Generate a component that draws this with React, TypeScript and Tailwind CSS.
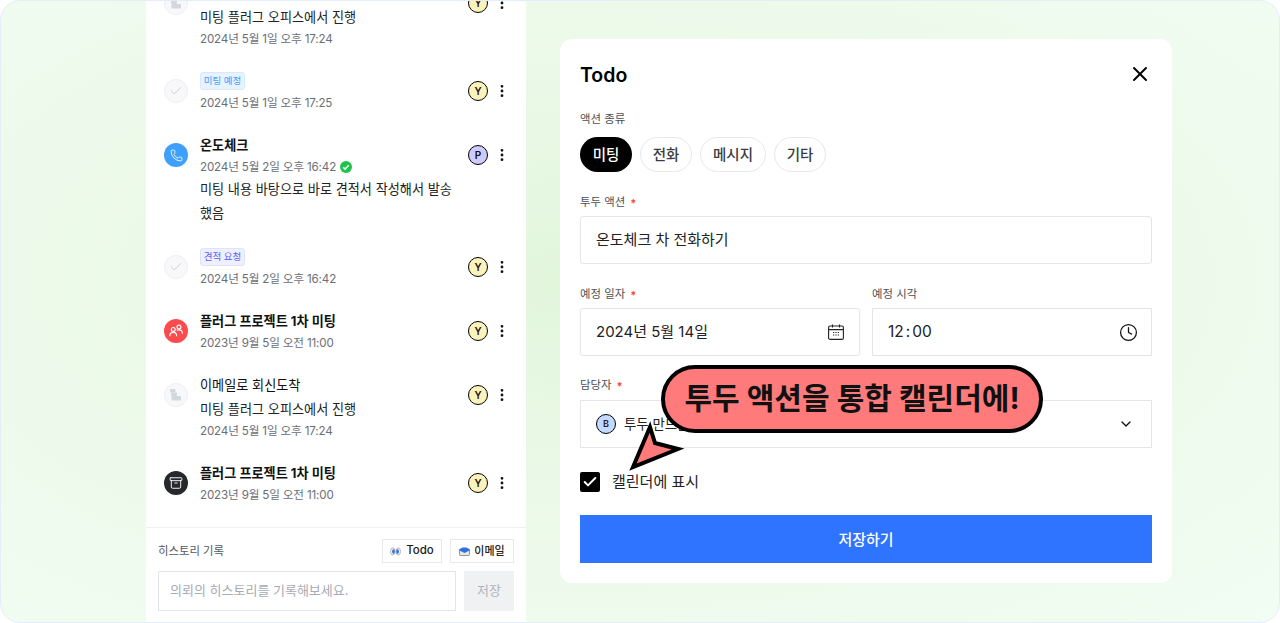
import { Archive, Check, ChevronDown, Clock, EllipsisVertical, Phone, X } from 'lucide-react'

type Kind = 'doc' | 'check' | 'phone' | 'meeting' | 'archive'

interface HistoryItem {
  kind: Kind
  title?: string
  bold?: boolean
  badge?: { text: string; cls: string }
  date: string
  done?: boolean
  lines?: string[]
  user: 'Y' | 'P'
}

const items: HistoryItem[] = [
  { kind: 'doc', title: '이메일로 회신도착', lines: ['미팅 플러그 오피스에서 진행'], date: '2024년 5월 1일 오후 17:24', user: 'Y' },
  { kind: 'check', badge: { text: '미팅 예정', cls: 'bg-[#e8f3ff] border-[#d6e9ff] text-[#3b9dff]' }, date: '2024년 5월 1일 오후 17:25', user: 'Y' },
  { kind: 'phone', title: '온도체크', bold: true, date: '2024년 5월 2일 오후 16:42', done: true, lines: ['미팅 내용 바탕으로 바로 견적서 작성해서 발송', '했음'], user: 'P' },
  { kind: 'check', badge: { text: '견적 요청', cls: 'bg-[#eeefff] border-[#e0e2ff] text-[#5b63f5]' }, date: '2024년 5월 2일 오후 16:42', user: 'Y' },
  { kind: 'meeting', title: '플러그 프로젝트 1차 미팅', bold: true, date: '2023년 9월 5일 오전 11:00', user: 'Y' },
  { kind: 'doc', title: '이메일로 회신도착', lines: ['미팅 플러그 오피스에서 진행'], date: '2024년 5월 1일 오후 17:24', user: 'Y' },
  { kind: 'archive', title: '플러그 프로젝트 1차 미팅', bold: true, date: '2023년 9월 5일 오전 11:00', user: 'Y' },
]

function KindIcon({ kind }: { kind: Kind }) {
  if (kind === 'phone') {
    return (
      <div className="flex h-6 w-6 items-center justify-center rounded-full bg-[#3fa0fb] text-white">
        <Phone size={13} strokeWidth={1.6} />
      </div>
    )
  }
  if (kind === 'meeting') {
    return (
      <div className="flex h-6 w-6 items-center justify-center rounded-full bg-[#fb4b4f] text-white">
        <svg width="16" height="16" viewBox="0 0 14 14" fill="none" stroke="#fff" strokeWidth="1">
          <circle cx="4.6" cy="5.6" r="1.7" />
          <circle cx="9.6" cy="3.6" r="1.7" />
          <path d="M1.6 11.6c0-2 1.2-3.4 3-3.4s3 1.4 3 3.4" />
          <path d="M7.6 6.4c.6-.3 1.3-.4 2-.4 1.8 0 3 1.4 3 3.4" />
        </svg>
      </div>
    )
  }
  if (kind === 'archive') {
    return (
      <div className="flex h-6 w-6 items-center justify-center rounded-full bg-[#26282c] text-white">
        <Archive size={14} strokeWidth={1.6} />
      </div>
    )
  }
  if (kind === 'check') {
    return (
      <div className="flex h-6 w-6 items-center justify-center rounded-full border border-[#eeeff2] bg-[#f8f8fa] text-[#c4c7cf]">
        <Check size={14} strokeWidth={1.4} />
      </div>
    )
  }
  return (
    <div className="flex h-6 w-6 items-center justify-center rounded-full border border-[#eeeff2] bg-[#f8f8fa]">
      <svg width="14" height="14" viewBox="0 0 14 14" fill="#d5d7de">
        <rect x="1" y="1" width="5.5" height="3.5" rx="1" />
        <rect x="2" y="4.5" width="6" height="3.5" rx="1" />
        <rect x="2.5" y="8" width="9.5" height="4.5" rx="1" />
      </svg>
    </div>
  )
}

function Row({ item }: { item: HistoryItem }) {
  return (
    <div className="flex">
      <div className="mt-[10px] mr-3 shrink-0">
        <KindIcon kind={item.kind} />
      </div>
      <div className="w-[268px] shrink-0">
        {item.badge && (
          <div className="flex h-6 items-center">
            <span className={`flex h-[18px] w-[45px] items-center justify-center rounded-[3px] border text-[9.5px] ${item.badge.cls}`}>{item.badge.text}</span>
          </div>
        )}
        {item.title && (
          <div className={`h-6 text-[13.15px] leading-6 text-[#111] ${item.bold ? 'font-bold' : ''}`}>{item.title}</div>
        )}
        {item.kind === 'doc' && item.lines?.map((l) => (
          <div key={l} className="h-6 text-[13.15px] leading-6 text-[#222]">{l}</div>
        ))}
        <div className="flex h-5 items-center gap-1 text-[11.6px] leading-5 tracking-[-0.15px] text-[#6b6e76]">
          {item.date}
          {item.done && (
            <svg width="12" height="12" viewBox="0 0 12 12">
              <circle cx="6" cy="6" r="6" fill="#1cc44a" />
              <path d="M3.2 6.2l1.9 1.9 3.6-3.8" fill="none" stroke="#fff" strokeWidth="1.5" />
            </svg>
          )}
        </div>
        {item.kind !== 'doc' && item.lines?.map((l) => (
          <div key={l} className="h-6 whitespace-nowrap text-[13.15px] leading-6 text-[#222]">{l}</div>
        ))}
      </div>
      <div className={`mt-[12px] flex h-5 w-5 shrink-0 items-center justify-center rounded-full border border-black text-[10px] font-semibold text-[#111] ${item.user === 'P' ? 'bg-[#cfcbff]' : 'bg-[#fdf3b8]'}`}>
        {item.user}
      </div>
      <div className="mt-[14px] ml-[6px] text-[#111]">
        <EllipsisVertical size={16} strokeWidth={2.2} />
      </div>
    </div>
  )
}

function Label({ text, required }: { text: string; required?: boolean }) {
  return (
    <div className="flex h-4 items-center gap-[5px] text-[11.4px] text-[#4c4f56]">
      {text}
      {required && <span className="text-[11px] font-bold text-[#ff4040]">*</span>}
    </div>
  )
}

const pills = [
  { text: '미팅', w: 'w-[52px]' },
  { text: '전화', w: 'w-[52px]' },
  { text: '메시지', w: 'w-[66px]' },
  { text: '기타', w: 'w-[52px]' },
]

export default function App() {
  return (
    <div className="h-[623px] w-[1280px] overflow-hidden bg-white font-['Inter','Noto_Sans_CJK_KR',sans-serif]">
      <div className="relative flex h-full overflow-hidden rounded-[20px] border border-[#e4eefb] bg-[radial-gradient(ellipse_at_45%_45%,#e2f6dc_0%,#ebf9e8_45%,#f2fdf3_100%)] pl-[145px]">
        <aside className="flex h-[622px] w-[380px] shrink-0 flex-col bg-white">
          <div className="h-[527px] shrink-0 overflow-hidden border-b border-[#eeeff1]">
            <div className="-mt-[20px] flex flex-col gap-5 pl-[18px]">
              {items.map((item, i) => (
                <Row key={i} item={item} />
              ))}
            </div>
          </div>
          <div className="px-3 pt-[11px]">
            <div className="flex h-6 items-center justify-between">
              <span className="pt-[2px] text-[11.4px] text-[#55585f]">히스토리 기록</span>
              <div className="flex gap-2">
                <button className="flex h-6 w-[60px] items-center justify-center gap-[5px] border border-[#e8e9ed] text-[11.5px] font-medium text-[#222]">
                  <svg width="11" height="9" viewBox="0 0 11 9" fill="none">
                    <ellipse cx="2.8" cy="4.5" rx="2.2" ry="3.6" stroke="#9a9da5" strokeWidth=".8" />
                    <ellipse cx="8.2" cy="4.5" rx="2.2" ry="3.6" stroke="#9a9da5" strokeWidth=".8" />
                    <ellipse cx="3.4" cy="4.5" rx="1.3" ry="2.2" fill="#2f6fe0" />
                    <ellipse cx="7.6" cy="4.5" rx="1.3" ry="2.2" fill="#2f6fe0" />
                  </svg>
                  Todo
                </button>
                <button className="flex h-6 w-16 items-center justify-center gap-1 border border-[#e8e9ed] text-[11px] font-medium text-[#222]">
                  <svg width="11" height="10" viewBox="0 0 11 10">
                    <rect x=".5" y="3" width="10" height="6.5" rx="1" fill="#e4e6eb" stroke="#555" strokeWidth=".6" />
                    <path d="M.5 3.5L3.5 1.5h4l3 2v1L5.5 7 .5 4.5z" fill="#2f6fe0" />
                  </svg>
                  이메일
                </button>
              </div>
            </div>
            <div className="mt-2 flex gap-2">
              <div className="flex h-10 w-[298px] items-center border border-[#e4e5ea] px-[11px] text-[13px] text-[#a8abb3]">의뢰의 히스토리를 기록해보세요.</div>
              <div className="flex h-10 w-[50px] items-center justify-center bg-[#f0f1f3] text-[13px] text-[#b0b3ba]">저장</div>
            </div>
          </div>
        </aside>

        <main className="mt-[38px] ml-[34px] h-[544px] w-[612px] rounded-xl bg-white px-5 pt-[23px]">
          <div className="flex h-6 items-center justify-between">
            <h1 className="pt-[3px] text-[19.5px] font-semibold text-black">Todo</h1>
            <X size={24} strokeWidth={2} className="text-black" />
          </div>
          <div className="mt-[26px]">
            <Label text="액션 종류" />
          </div>
          <div className="mt-[9px] flex gap-2">
            {pills.map((p, i) => (
              <div
                key={p.text}
                className={`flex h-[35px] items-center justify-center rounded-full text-[14.5px] font-medium ${p.w} ${i === 0 ? 'bg-black text-white' : 'border border-[#e6e7eb] text-[#3a3c42]'}`}
              >
                {p.text}
              </div>
            ))}
          </div>
          <div className="mt-[23px]">
            <Label text="투두 액션" required />
          </div>
          <div className="mt-[5px] flex h-12 items-center rounded-[3px] border border-[#e4e5ea] px-[15px] text-[15px] text-[#222]">온도체크 차 전화하기</div>
          <div className="mt-[23px] flex gap-3">
            <div className="w-[280px]">
              <Label text="예정 일자" required />
              <div className="mt-[5px] flex h-12 items-center justify-between rounded-[3px] border border-[#e4e5ea] pr-[15px] pl-[15px] text-[15px] text-[#222]">
                2024년 5월 14일
                <svg width="16" height="16" viewBox="0 0 16 16" fill="none" stroke="#222" strokeWidth="1.1">
                  <rect x=".6" y="2" width="14.8" height="13.4" rx="1.5" />
                  <path d="M.6 5.6h14.8M4.5.4v3M11.5.4v3" />
                  <path d="M5 8.5h1.2M7.4 8.5h1.2M9.8 8.5H11M5 11h1.2M7.4 11h1.2M9.8 11H11" strokeWidth="1.2" />
                </svg>
              </div>
            </div>
            <div className="w-[280px]">
              <Label text="예정 시각" />
              <div className="mt-[5px] flex h-12 items-center justify-between border border-[#e4e5ea] pr-[13px] pl-[15px] text-[15.5px] text-[#222]">
                <div className="flex items-center gap-[2px]">
                  <span>12</span>
                  <span>:</span>
                  <span>00</span>
                </div>
                <Clock size={19} strokeWidth={1.6} className="text-[#111]" />
              </div>
            </div>
          </div>
          <div className="mt-[22px]">
            <Label text="담당자" required />
          </div>
          <div className="mt-[6px] flex h-12 items-center justify-between border border-[#e4e5ea] pr-[17px] pl-[15px] text-[13.4px] text-[#222]">
            <div className="flex items-center gap-2">
              <span className="flex h-5 w-5 items-center justify-center rounded-full border border-black bg-[#c4d9ff] text-[9px] font-semibold">B</span>
              투두 만드는 사람
            </div>
            <ChevronDown size={16} strokeWidth={2} className="text-[#111]" />
          </div>
          <div className="mt-[23px] flex items-center gap-3">
            <div className="flex h-5 w-5 items-center justify-center rounded-[2px] bg-black text-white">
              <Check size={16} strokeWidth={3} />
            </div>
            <span className="text-[15px] text-[#222]">캘린더에 표시</span>
          </div>
          <button className="mt-[21px] flex h-12 w-full items-center justify-center bg-[#2f74ff] pt-[3px] text-[15px] font-medium text-white">저장하기</button>
        </main>

        <div className="absolute top-[364px] left-[660px] flex h-[68px] w-[382px] items-center justify-center rounded-full border-4 border-black bg-[#ff7b7b] pb-[2px] text-[30px] font-bold whitespace-nowrap text-[#111]">
          투두 액션을 통합 캘린더에!
        </div>
        <svg className="absolute top-[413px] left-[621px]" width="64" height="60" viewBox="0 0 64 60">
          <path d="M28 13l5 16 23 6-45 18z" fill="#ff7b7b" stroke="#000" strokeWidth="4" />
        </svg>
      </div>
    </div>
  )
}
